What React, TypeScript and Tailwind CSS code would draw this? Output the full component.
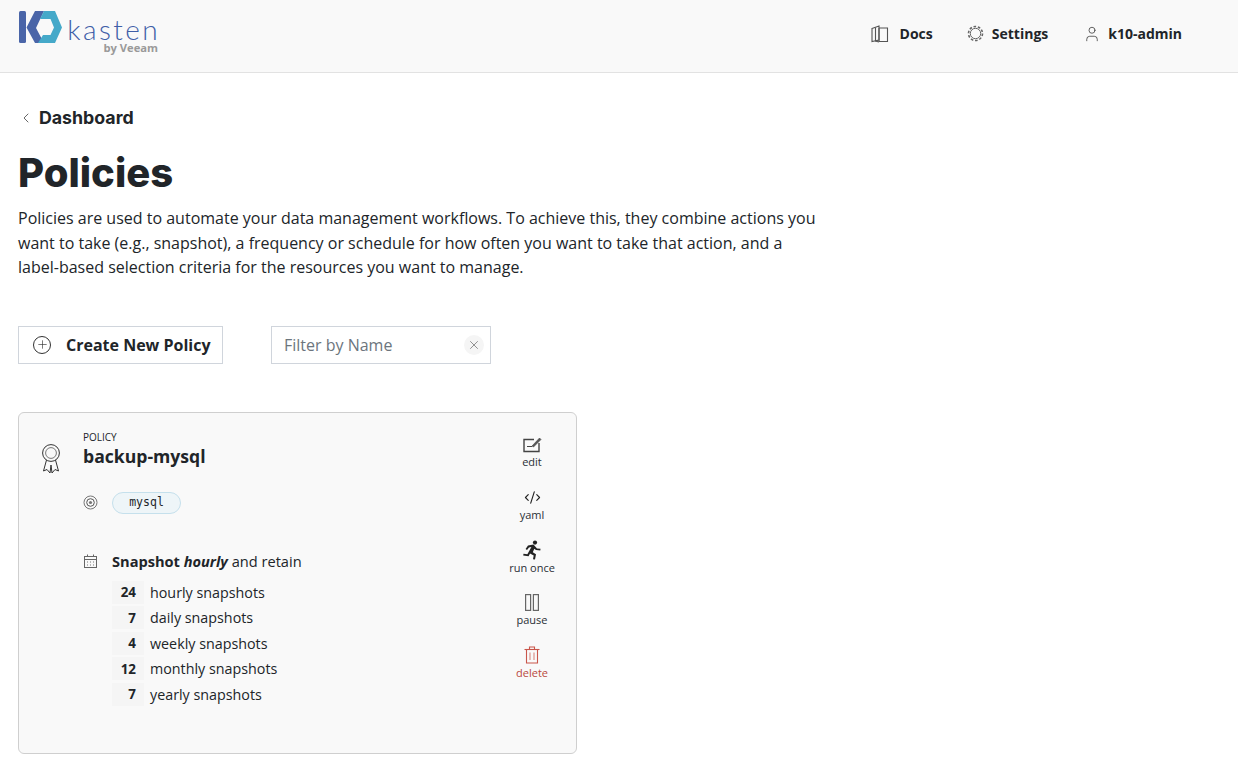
import { ChevronLeft, CodeXml, Plus, User, X } from "lucide-react"

const retention = [
  { count: 24, label: "hourly snapshots" },
  { count: 7, label: "daily snapshots" },
  { count: 4, label: "weekly snapshots" },
  { count: 12, label: "monthly snapshots" },
  { count: 7, label: "yearly snapshots" },
]

function Logo() {
  return (
    <div className="flex items-start">
      <svg width="46" height="34" viewBox="0 0 46 34" className="mt-[10px] shrink-0">
        <rect x="1" y="1" width="7" height="32" rx="1.5" fill="#4a65a8" />
        <path d="M17 1 L26 1 L18 18 L26 33 L17 33 L8.5 17.5 Z" fill="#4a65a8" />
        <path d="M26 1 L37 1 L44 17.5 L37 33 L20 33 L25 25 L32.5 25 L36 17.5 L32.5 9 L22 9 Z" fill="#45a9c9" />
      </svg>
      <div className="ml-[3px] flex w-[93px] flex-col items-end">
        <span className="mt-[17px] text-[28px] leading-[25px] font-light tracking-[2.4px] text-[#3f5fa8] font-['Lato',sans-serif]">kasten</span>
        <span className="mr-[2px] text-[11.2px] leading-[11px] font-bold text-[#9a9a9a] font-['Open_Sans',sans-serif]">by Veeam</span>
      </div>
    </div>
  )
}

function BookIcon() {
  return (
    <svg width="18" height="18" viewBox="0 0 18 18" fill="none" stroke="#555" strokeWidth="1.1">
      <path d="M1 3.5 L8 1 V15 L1 16.5 Z" />
      <path d="M8 3 H16.5 V16.5 H8 V3" />
      <path d="M4.5 2.5 V16 L8 17" />
    </svg>
  )
}

function GearIcon() {
  return (
    <svg width="17" height="17" viewBox="0 0 17 17" fill="none" stroke="#666">
      <circle cx="8.5" cy="8.5" r="5.2" strokeWidth="1" />
      <circle cx="8.5" cy="8.5" r="7" strokeWidth="1.6" strokeDasharray="2.6 1.8" />
    </svg>
  )
}

function RibbonIcon() {
  return (
    <svg width="18" height="30" viewBox="0 0 18 30" fill="none" stroke="#333" strokeWidth="1">
      <circle cx="9" cy="9" r="8.4" />
      <circle cx="9" cy="9" r="5.4" stroke="#777" />
      <path d="M4.5 16 L1.5 27 L5 25.5 L8 29 L9 21 L10 29 L13 25.5 L16.5 27 L13.5 16" />
    </svg>
  )
}

function TargetIcon() {
  return (
    <svg width="15" height="15" viewBox="0 0 15 15" fill="none">
      <circle cx="7.5" cy="7.5" r="6.5" stroke="#777" />
      <circle cx="7.5" cy="7.5" r="3.8" stroke="#555" />
      <circle cx="7.5" cy="7.5" r="1.6" fill="#777" />
    </svg>
  )
}

function CalendarIcon() {
  return (
    <svg width="13" height="14" viewBox="0 0 13 14" fill="none" stroke="#666">
      <rect x="0.5" y="2.5" width="12" height="11" />
      <path d="M0.5 5.5 H12.5 M3.5 0.5 V3 M9.5 0.5 V3" />
      <path d="M3 8 H4 M6 8 H7 M9 8 H10 M3 11 H4 M6 11 H7 M9 11 H10" stroke="#777" />
    </svg>
  )
}

function EditIcon() {
  return (
    <svg width="19" height="17" viewBox="0 0 19 17" fill="none" stroke="#444">
      <path d="M11 3.5 H1 V15.5 H16 V7" strokeWidth="1.4" />
      <path d="M4 10.5 H9" strokeWidth="1" />
      <path d="M9 10 L16.5 2 L18 3.5 L10.5 11 Z" fill="#555" strokeWidth="0.6" />
    </svg>
  )
}

function RunIcon() {
  return (
    <svg width="20" height="20" viewBox="0 0 20 20" fill="#222">
      <circle cx="13" cy="2.6" r="2.1" />
      <path d="M6 5.5 L11.5 4.6 L15 8.6 L18.5 8.8 L18.3 10.4 L14 10.1 L12.3 8.8 L10.8 12.2 L14 14.3 L13 19.5 L11 19.2 L11.7 15.4 L8 13.4 L6.6 16.2 L1.2 15.6 L1.5 13.8 L5.4 14.2 L9.4 7 L7 7.4 L5 10 L3.6 9 Z" />
    </svg>
  )
}

function PauseIcon() {
  return (
    <svg width="14" height="17" viewBox="0 0 14 17" fill="none" stroke="#666" strokeWidth="1.2">
      <rect x="0.6" y="0.6" width="5" height="15.8" />
      <rect x="8.4" y="0.6" width="5" height="15.8" />
    </svg>
  )
}

function TrashIcon() {
  return (
    <svg width="16" height="18" viewBox="0 0 16 18" fill="none" stroke="#c9564b" strokeWidth="1.1">
      <path d="M0.5 3.5 H15.5" />
      <path d="M5.5 3.5 V1 H10.5 V3.5" />
      <path d="M2.5 3.5 V17 H13.5 V3.5" />
      <path d="M6 6.5 V14 M10 6.5 V14" stroke="#d98a82" />
    </svg>
  )
}

function Action({ icon, label, danger }: { icon: React.ReactNode; label: string; danger?: boolean }) {
  return (
    <div className="flex h-[52.75px] w-[60px] flex-col items-center">
      <div className="flex h-[19.5px] items-center justify-center">{icon}</div>
      <span className={`text-[11px] leading-[16px] ${danger ? "text-[#b9483d]" : "text-[#2a2f36]"}`}>{label}</span>
    </div>
  )
}

function App() {
  return (
    <div className="min-h-[778px] bg-white font-['Open_Sans',sans-serif] text-[#212529]">
      <header className="flex h-[73px] items-start justify-between border-b border-[#e2e2e2] bg-[#f9f9f9] pl-[18px] pr-[56px]">
        <Logo />
        <nav className="flex h-[67px] items-center text-[14px] font-bold text-[#212529]">
          <div className="flex items-center gap-[11px]">
            <BookIcon />
            <span>Docs</span>
          </div>
          <div className="ml-[34px] flex items-center gap-[8px]">
            <GearIcon />
            <span>Settings</span>
          </div>
          <div className="ml-[35px] flex items-center gap-[7px]">
            <User size={18} strokeWidth={1} color="#333" />
            <span>k10-admin</span>
          </div>
        </nav>
      </header>

      <main className="pl-[18px]">
        <div className="mt-[33px] flex h-[24px] items-center gap-[5px]">
          <ChevronLeft size={16} strokeWidth={1.5} color="#666" />
          <span className="font-['Inter',sans-serif] text-[17.75px] font-bold">Dashboard</span>
        </div>

        <h1 className="mt-[19px] font-['Inter',sans-serif] text-[40px] leading-[48px] font-extrabold">Policies</h1>

        <p className="mt-[9px] w-[805px] text-[16px] leading-[24.5px]">
          Policies are used to automate your data management workflows. To achieve this, they combine actions you want to take (e.g., snapshot), a frequency or schedule for how often you want to take that action, and a label-based selection criteria for the resources you want to manage.
        </p>

        <div className="mt-[46px] flex items-center gap-[48px]">
          <button className="flex h-[38px] w-[205px] items-center border border-[#d0d5dc] bg-white pl-[14px]">
            <span className="flex h-[18px] w-[18px] items-center justify-center rounded-full border border-[#333]">
              <Plus size={13} strokeWidth={1.2} color="#333" />
            </span>
            <span className="ml-[15px] text-[16px] font-bold">Create New Policy</span>
          </button>
          <div className="flex h-[38px] w-[220px] items-center justify-between border border-[#d0d5dc] bg-white pl-[12px] pr-[6px]">
            <span className="text-[16px] text-[#6c757d]">Filter by Name</span>
            <span className="flex h-[20px] w-[20px] items-center justify-center rounded-full bg-[#f5f5f5]">
              <X size={14} strokeWidth={1.2} color="#666" />
            </span>
          </div>
        </div>

        <section className="mt-[48px] flex h-[342px] w-[559px] justify-between rounded-[6px] border border-[#cfcfcf] bg-[#f9f9f9]">
          <div className="flex">
            <div className="ml-[23px] mt-[31px] w-[41px] shrink-0">
              <RibbonIcon />
            </div>
            <div>
              <div className="mt-[17px] text-[10px] leading-[14px]">POLICY</div>
              <div className="text-[17.6px] leading-[25px] font-bold">backup-mysql</div>

              <div className="mt-[23px] flex items-center gap-[14px]">
                <TargetIcon />
                <span className="flex h-[22px] w-[69px] items-center justify-center rounded-full border border-[#c5e0ec] bg-[#eef5f8] font-['DejaVu_Sans_Mono',monospace] text-[11.5px]">mysql</span>
              </div>

              <div className="mt-[37px] flex items-center gap-[15px] pl-[1px]">
                <CalendarIcon />
                <span className="text-[14.6px] leading-[20px]">
                  <b>Snapshot <i>hourly</i></b> and retain
                </span>
              </div>

              <ul className="ml-[29px] mt-[9px]">
                {retention.map((r) => (
                  <li key={r.label} className="flex h-[25.5px] items-center text-[14.3px]">
                    <span className="flex h-[23px] w-[32px] items-center justify-end bg-[#f5f5f5] pr-[8px] text-[13.4px] font-bold">{r.count}</span>
                    <span className="ml-[6px]">{r.label}</span>
                  </li>
                ))}
              </ul>
            </div>
          </div>

          <div className="mr-[14px] mt-[22px] flex flex-col">
            <Action icon={<EditIcon />} label="edit" />
            <Action icon={<CodeXml size={17} strokeWidth={1.6} color="#222" />} label="yaml" />
            <Action icon={<RunIcon />} label="run once" />
            <Action icon={<PauseIcon />} label="pause" />
            <Action icon={<TrashIcon />} label="delete" danger />
          </div>
        </section>
      </main>
    </div>
  )
}

export default App
